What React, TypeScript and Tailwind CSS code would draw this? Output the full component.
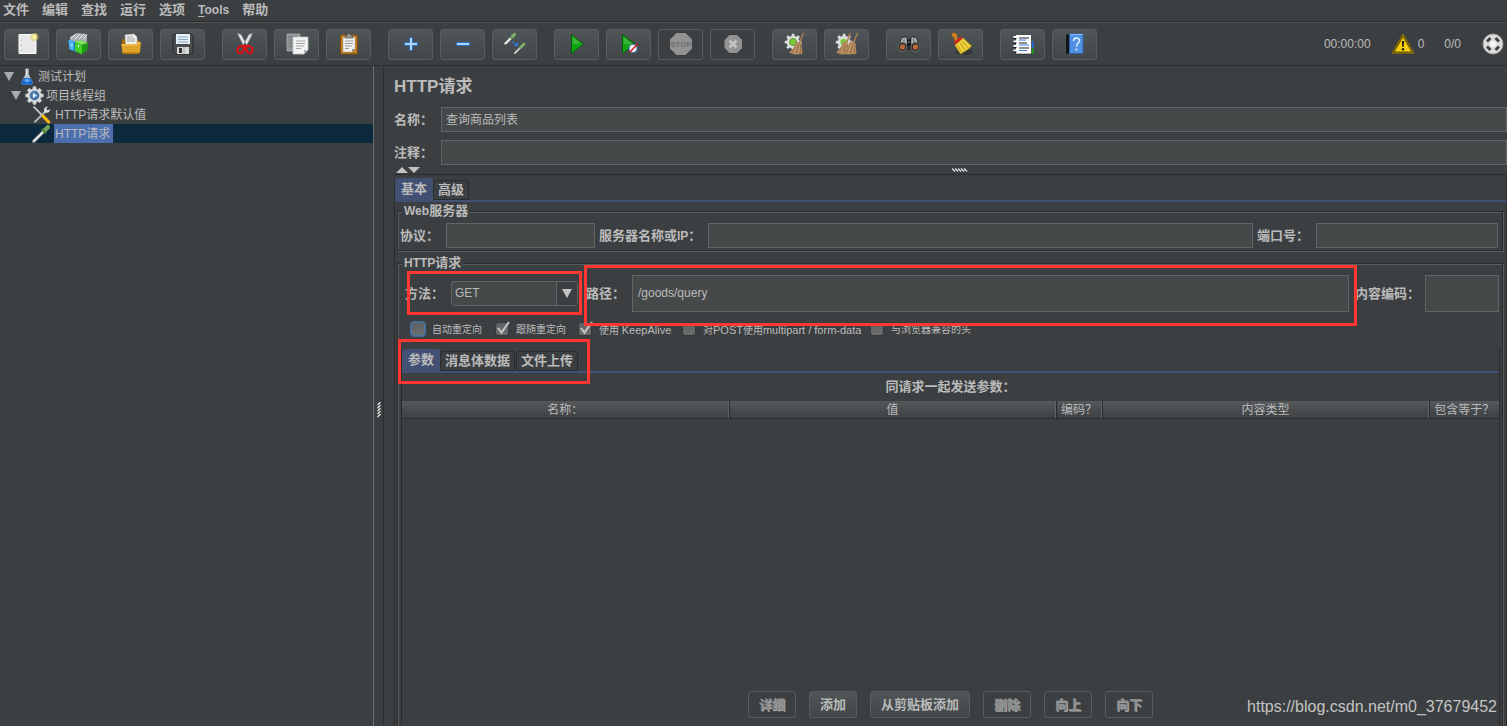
import React from 'react';
import clsx from 'clsx';

interface IconProps {
  children: React.ReactNode;
  className?: string;
}

const Svg: React.FC<IconProps> = ({ children, className = 'size-6' }) => (
  <svg viewBox="0 0 24 24" className={clsx('shrink-0', className)} fill="none" aria-hidden="true">
    {children}
  </svg>
);

const NewIcon = () => (
  <Svg>
    <path d="M4 2.500h17V21.500H4z" fill="#e9e9e9" stroke="#fff" />
    <path d="M6 8v12" stroke="#aaa" strokeDasharray="1 4" />
    <circle cx="19.500" cy="5" r="4" fill="#d8c95a" opacity=".55" />
    <circle cx="19.500" cy="5" r="2" fill="#fdf6a0" />
  </Svg>
);

const TemplatesIcon = () => (
  <Svg>
    <path d="M3 5l7-4 10 1 0 7-4 4-13-3z" fill="#a9b0b3" />
    <path d="M4 6l5-4M8 7l5-5M12 7l5-5M16 7l4-4" stroke="#eceff0" />
    <path d="M1.500 8l5 1 3 2v9l-7-3z" fill="#1585d3" />
    <path d="M1.500 8l5 1v10l-4-2z" fill="#4fb4f0" />
    <path d="M8 10l5-2 8 3-1 8-6 3.500-6-3.500z" fill="#1c9c16" />
    <path d="M8 10l7 2v10l-7-3z" fill="#45cf2b" />
    <path d="M8 10l5-2 8 3-6 1.500z" fill="#8ae366" />
    <path d="M11.500 13v2M5 12v2" stroke="#fff" />
  </Svg>
);

const OpenIcon = () => (
  <Svg>
    <path d="M3 8l2-1h2v4h10V8h3l1 12-2 2H4l-1-2z" fill="#a96d08" />
    <path d="M6 3l9-1 3 3v10H7z" fill="#f1f1f1" stroke="#bdbdbd" strokeWidth=".7" />
    <path d="M8 5h6M8 7h8M8 9h8" stroke="#8e8e8e" strokeWidth=".8" />
    <path d="M2 12h15l2-2h3l-1 10-2 1.500H4z" fill="#dfa32a" />
    <path d="M3 13h15l1-2h2" stroke="#f8d06a" />
    <path d="M4 21h15" stroke="#a66a04" />
  </Svg>
);

const SaveIcon = () => (
  <Svg>
    <path d="M3 2h17l2 2v17l-1 1H4l-2-2V3z" fill="#4a4d4e" stroke="#222" strokeWidth=".8" />
    <path d="M5 2h14v10H5z" fill="#e8eff6" />
    <path d="M7 5h10M7 7.500h10M7 10h10" stroke="#87a7c4" />
    <path d="M6 15h12v7H6z" fill="#d6d8d9" />
    <path d="M8 16h3v5H8z" fill="#333" />
    <path d="M13 15v7" stroke="#a7a9aa" />
  </Svg>
);

const CutIcon = () => (
  <Svg>
    <path d="M4.500 1.500l3.500 1 6 11-2.500 2zM19.500 1.500l-3.500 1-6 11 2.500 2z" fill="#e6e6e6" stroke="#9b9b9b" strokeWidth=".6" />
    <path d="M11 14c-3-.5-6 .5-6.500 3.500s2 4.500 4.500 3 2-4.500 2-6.500zM13 14c3-.5 6 .5 6.500 3.500s-2 4.500-4.500 3-2-4.500-2-6.500z" stroke="#dd1212" strokeWidth="2.200" />
  </Svg>
);

const CopyIcon = () => (
  <Svg>
    <path d="M2 2h13v17H2z" fill="#8f9496" stroke="#a9adaf" strokeWidth=".8" />
    <path d="M4 5h8M4 8h4M4 11h4M4 14h4" stroke="#6e7375" />
    <path d="M8 5h15v13l-4 4H8z" fill="#f3f3f3" stroke="#c9c9c9" strokeWidth=".8" />
    <path d="M11 9h9M11 11.500h9M11 14h8M11 16.500h5" stroke="#a5a5a5" />
    <path d="M23 18h-4v4z" fill="#b5b5b5" />
  </Svg>
);

const PasteIcon = () => (
  <Svg>
    <rect x="3.500" y="3" width="17" height="19" rx="1" fill="#c07b1c" stroke="#7f4c09" />
    <path d="M6 5h12v12l-3 3H6z" fill="#f1f1f1" stroke="#aaa" strokeWidth=".6" />
    <path d="M8 9h8M8 11.500h8M8 14h7M8 16.500h4" stroke="#9a9a9a" />
    <path d="M8 6V4l2-.5 1-2h2l1 2 2 .5v2z" fill="#95988f" stroke="#4d4f4b" strokeWidth=".7" />
    <path d="M18 17h-3v3z" fill="#888" />
  </Svg>
);

const PlusIcon = () => (
  <Svg>
    <path d="M10.500 5.500h3v5h5v3h-5v5h-3v-5h-5v-3h5z" fill="#a9d4fb" stroke="#2b6cc0" />
  </Svg>
);

const MinusIcon = () => (
  <Svg>
    <path d="M5.500 10.500h13v3h-13z" fill="#a9d4fb" stroke="#2b6cc0" />
  </Svg>
);

const ToggleIcon = () => (
  <Svg>
    <path d="M2.500 11.500l6-6" stroke="#e9e9e4" strokeWidth="2.400" strokeLinecap="round" />
    <path d="M8.500 5.500l3-3" stroke="#7fae6b" strokeWidth="3.200" strokeLinecap="round" />
    <path d="M7 4l3 3" stroke="#4c7040" />
    <path d="M12 21l5.500-5.500" stroke="#c9ccc7" strokeWidth="1.800" strokeLinecap="round" />
    <path d="M17.500 15.500l3.500-3.500" stroke="#7fae6b" strokeWidth="2.800" strokeLinecap="round" />
    <path d="M8.500 9.500l4 3" stroke="#2878e8" strokeWidth="1.200" strokeDasharray="2 1" />
    <path d="M15 10v4h-4z" fill="#2878e8" />
  </Svg>
);

const PlayShape = () => (
  <>
    <path d="M6.500 2.500l12 9.500-12 9.500z" fill="#12a512" stroke="#075f0b" />
    <path d="M7.500 5l9 7h-9z" fill="#4cb94c" opacity=".7" />
  </>
);

const StartIcon = () => <Svg><PlayShape /></Svg>;

const StartNoTimersIcon = () => (
  <Svg>
    <g transform="translate(-1 0)"><PlayShape /></g>
    <circle cx="16" cy="16.500" r="4" fill="#f5f8fb" stroke="#4a7db5" strokeWidth="1.200" />
    <path d="M12.500 20.500l8-8.500" stroke="#e01b1b" strokeWidth="1.500" />
  </Svg>
);

const StopIcon = () => (
  <Svg>
    <path d="M7.500 1h9L23 7.500v9L16.500 23h-9L1 16.500v-9z" fill="#929292" />
    <text x="12" y="15" textAnchor="middle" fontSize="8" fontWeight="bold" fill="#707070">STOP</text>
  </Svg>
);

const ShutdownIcon = () => (
  <Svg>
    <path d="M8.500 3h7.500L21 8v8l-5 5H8.500L3.500 16V8z" fill="#929292" />
    <path d="M8.500 8.500l7 7M15.500 8.500l-7 7" stroke="#c4c4c4" strokeWidth="2.600" />
  </Svg>
);

const gearPath =
  'M10.500 1h3l.6 3 2 .8 2.600-1.700 2.200 2.200-1.700 2.600.8 2 3 .6v3l-3 .6-.8 2 1.700 2.600-2.200 2.200-2.600-1.700-2 .8-.6 3h-3l-.6-3-2-.8-2.600 1.700-2.200-2.200 1.700-2.600-.8-2-3-.6v-3l3-.6.8-2-1.700-2.600 2.200-2.200 2.600 1.700 2-.8z';

interface BroomProps {
  x: number;
}

const StrawBroom: React.FC<BroomProps> = ({ x }) => (
  <g transform={`translate(${x} 0)`}>
    <path d="M20.500 1l-4 10" stroke="#a77d52" strokeWidth="1.600" />
    <path d="M13 9l5.500 2.500 1 10.500-8 .5-5.500-2c3.500-2.500 6-6.500 7-11.500z" fill="#b48b60" />
    <path d="M14 12l-4.500 8M16 12l-2.500 9M17.500 13l-.5 8" stroke="#7b5934" strokeWidth=".7" />
    <path d="M14.500 11l-3.500 9M17 12l-1.500 9" stroke="#d3af83" strokeWidth=".6" />
  </g>
);

const ClearIcon = () => (
  <Svg>
    <g transform="translate(1 1) scale(.76)">
      <path d={gearPath} fill="#dedede" />
    </g>
    <circle cx="10" cy="10" r="3.500" fill="#78cc37" stroke="#458b1a" strokeWidth=".8" />
    <StrawBroom x={0} />
  </Svg>
);

const ClearAllIcon = () => (
  <Svg>
    <g transform="translate(0 1) scale(.76)">
      <path d={gearPath} fill="#dedede" />
    </g>
    <circle cx="8.500" cy="10" r="3.200" fill="#78cc37" />
    <StrawBroom x={-5} />
    <StrawBroom x={2} />
  </Svg>
);

const SearchIcon = () => (
  <Svg>
    <path d="M5 5l4-1 2 3h2l2-3 4 1 4.500 9v4H.5v-4z" fill="#292b2c" />
    <path d="M5 6l4-1 1 8-7 1zM19 6l-4-1-1 8 7 1z" fill="#8a8f91" />
    <path d="M6 6l-3 7M18 6l3 7M9 6v5M15 6v5" stroke="#d0d4d5" />
    <circle cx="5.500" cy="15" r="4.500" fill="#222" stroke="#777b7d" />
    <circle cx="18.500" cy="15" r="4.500" fill="#222" stroke="#777b7d" />
    <circle cx="5.500" cy="15" r="2.800" fill="#b96938" />
    <circle cx="18.500" cy="15" r="2.800" fill="#b96938" />
    <path d="M10.500 8h3v6h-3z" fill="#161616" />
    <path d="M11 10h2" stroke="#8a8f91" />
  </Svg>
);

const ResetSearchIcon = () => (
  <Svg>
    <ellipse cx="15" cy="20" rx="9" ry="3" fill="#2e3132" opacity=".7" />
    <path d="M2 3l2.500-2.500L8 2l1 6-3 2-1-4z" fill="#c88229" stroke="#875116" strokeWidth=".7" />
    <path d="M6 13l8-7 8.500 8-3 3-8 5z" fill="#edd03b" stroke="#b9950f" strokeWidth=".7" />
    <path d="M11 11l5 7M13.500 9.500l6 6.500M8.500 13l4 7" stroke="#c09b18" />
    <path d="M5.500 11.500l7-6" stroke="#d6201a" strokeWidth="2.400" />
  </Svg>
);

const FunctionIcon = () => (
  <Svg>
    <path d="M20 9h2.500v7H20z" fill="#1f6fe0" />
    <path d="M20 16h2.500v6H20z" fill="#129d1a" />
    <path d="M4.500 2.500h16V22h-16z" fill="#fbfbfb" stroke="#151515" strokeWidth=".6" />
    <path d="M8 6h10M8 11h8M8 16h10" stroke="#222" />
    <path d="M8 8h7M8 13h10M8 18.500h8" stroke="#3c80dd" />
    <path d="M2.500 5h3M2.500 9.500h3M2.500 14h3M2.500 18.500h3" stroke="#fff" strokeWidth="2.200" />
    <path d="M2.500 6.500h3M2.500 11h3M2.500 15.500h3M2.500 20h3" stroke="#111" />
  </Svg>
);

const HelpIcon = () => (
  <Svg>
    <path d="M3 3l3.500-1.500v20L3 22z" fill="#121619" />
    <path d="M6.500 2h13.500v19.500H6.500z" fill="#4f90e2" stroke="#2c62ac" strokeWidth=".8" />
    <path d="M7 2.500h13" stroke="#8dbbf3" />
    <path d="M10.500 9c0-4 6-4 6-.5 0 2.500-3 2.500-3 6" stroke="#e2efff" strokeWidth="1.500" />
    <circle cx="13.500" cy="17.500" r="1.100" fill="#e2efff" />
  </Svg>
);

const WarningIcon = () => (
  <Svg>
    <path d="M12 2.500L22.500 21h-21z" fill="#f7cd12" stroke="#8c6d00" strokeWidth="1.500" strokeLinejoin="round" />
    <path d="M12 4.500L21 20H3z" stroke="#3b3000" strokeWidth=".8" />
    <path d="M10.800 9h2.400l-.6 6h-1.200z" fill="#1c1a10" />
    <circle cx="12" cy="17.300" r="1.200" fill="#1c1a10" />
  </Svg>
);

const RemoteIcon = () => (
  <Svg>
    <circle cx="12" cy="12" r="10" fill="#dcdcdc" stroke="#a4a4a4" />
    <path d="M9.500 6L6 9.500M14.500 6L18 9.500M9.500 18L6 14.500M14.500 18l3.500-3.500" stroke="#3e3e3e" strokeWidth="2.800" />
    <circle cx="12" cy="12" r="3" fill="#f4f4f4" />
  </Svg>
);

const FlaskIcon = () => (
  <Svg className="size-[19px]">
    <path d="M9.500 2h4v7l5.500 11-1.500 2.500h-12L4 20 9.500 9z" fill="#b9c4ce" />
    <path d="M7.500 14h8l3.500 6-1.500 2.500h-12L4 20z" fill="#1b66c9" />
    <ellipse cx="11.500" cy="17" rx="3.500" ry="2.200" fill="#57a5f4" />
    <path d="M10.500 3v8" stroke="#fff" />
  </Svg>
);

const ThreadGroupIcon = () => (
  <Svg className="size-[19px]">
    <path d={gearPath} fill="#d9dde0" stroke="#c4c9cd" strokeWidth="1.200" />
    <circle cx="12" cy="12" r="5.500" fill="#4a79b6" stroke="#33598c" />
    <path d="M10 8.500l5 3.500-5 3.500z" fill="#e6f1ff" />
  </Svg>
);

const DefaultsIcon = () => (
  <Svg className="size-[19px]">
    <path d="M3 22L18 7" stroke="#7f858a" strokeWidth="3" />
    <path d="M3 22L18 7" stroke="#e0e3e5" strokeWidth="1.200" />
    <path d="M16 9c-2-3 0-7 4-7l-2 3 2 2 3-2c0 4-4 6-7 4z" fill="#dfe2e4" />
    <path d="M2 2l12 12" stroke="#c9cdd0" strokeWidth="2" />
    <path d="M14 14l7 7.500" stroke="#f0b90e" strokeWidth="4" strokeLinecap="round" />
  </Svg>
);

const SamplerIcon = () => (
  <Svg className="size-[19px]">
    <path d="M2 22L14 10" stroke="#6e7479" strokeWidth="4.400" strokeLinecap="round" />
    <path d="M2.500 21.500L14 10" stroke="#e9edf0" strokeWidth="2.600" strokeLinecap="round" />
    <path d="M15.500 8.500l4.500-4.500" stroke="#6fa55a" strokeWidth="5.500" strokeLinecap="round" />
    <path d="M12 6l6 6" stroke="#4b7b42" strokeWidth="2" />
  </Svg>
);

interface ToolItem {
  label: string;
  icon: React.FC;
  disabled?: boolean;
}

const toolGroups: ToolItem[][] = [
  [
    { label: '新建', icon: NewIcon },
    { label: '模板', icon: TemplatesIcon },
    { label: '打开', icon: OpenIcon },
    { label: '保存', icon: SaveIcon },
  ],
  [
    { label: '剪切', icon: CutIcon },
    { label: '复制', icon: CopyIcon },
    { label: '粘贴', icon: PasteIcon },
  ],
  [
    { label: '展开', icon: PlusIcon },
    { label: '收起', icon: MinusIcon },
    { label: '切换', icon: ToggleIcon },
  ],
  [
    { label: '启动', icon: StartIcon },
    { label: '不停顿开始', icon: StartNoTimersIcon },
    { label: '停止', icon: StopIcon, disabled: true },
    { label: '关闭', icon: ShutdownIcon, disabled: true },
  ],
  [
    { label: '清除', icon: ClearIcon },
    { label: '清除全部', icon: ClearAllIcon },
  ],
  [
    { label: '搜索', icon: SearchIcon },
    { label: '重置搜索', icon: ResetSearchIcon },
  ],
  [
    { label: '函数助手', icon: FunctionIcon },
    { label: '帮助', icon: HelpIcon },
  ],
];

const menus = ['文件', '编辑', '查找', '运行', '选项', 'Tools', '帮助'];

const MenuBar = () => (
  <nav className="flex h-[22px] items-start gap-[13px] border-b border-[#2b2d2e] pl-[3px] text-[13px] leading-5 font-bold">
    {menus.map((menu) => (
      <button key={menu} type="button">
        {menu === 'Tools' ? <span className="text-xs leading-[18px]"><u className="underline-offset-2">T</u>ools</span> : menu}
      </button>
    ))}
  </nav>
);

const Toolbar = () => (
  <div className="flex h-[44px] items-center justify-between border-t border-b border-t-[#57534f] border-b-[#2b2d2e] pl-1">
    <div className="flex gap-[17px]">
      {toolGroups.map((group, i) => (
        <div key={i} className="flex gap-[7px]">
          {group.map(({ label, icon: Icon, disabled }) => (
            <button
              key={label}
              type="button"
              aria-label={label}
              disabled={disabled}
              className={clsx(
                'flex h-[31px] w-[45px] items-center justify-center rounded-[3px] border border-[#5a5d5e]',
                !disabled && 'bg-linear-to-b from-[#505658] to-[#414648]'
              )}
            >
              <Icon />
            </button>
          ))}
        </div>
      ))}
    </div>
    <div className="flex items-center pr-[2px] text-xs">
      <span className="mr-5">00:00:00</span>
      <WarningIcon />
      <span className="mr-5 ml-[3px]">0</span>
      <span className="mr-5">0/0</span>
      <RemoteIcon />
    </div>
  </div>
);

const Expander = () => (
  <svg viewBox="0 0 10 9" className="mr-1 h-[9px] w-[10px] shrink-0" aria-hidden="true">
    <path d="M0 0h10L5 9z" fill="#a9abac" />
  </svg>
);

const Tree = () => (
  <ul className="text-xs leading-[19px]">
    <li className="flex h-[19px] items-center pl-1">
      <Expander />
      <FlaskIcon />
      <span className="pt-px pl-px">测试计划</span>
    </li>
    <li className="flex h-[19px] items-center pl-[11px]">
      <Expander />
      <ThreadGroupIcon />
      <span className="pt-px pl-[2px]">项目线程组</span>
    </li>
    <li className="flex h-[19px] items-center pl-8">
      <DefaultsIcon />
      <span className="ml-[3px] px-px pt-px">HTTP请求默认值</span>
    </li>
    <li className="flex h-[19px] items-center bg-[#0d293e] pl-8">
      <SamplerIcon />
      <span className="ml-[3px] h-[19px] bg-[#4b6eaf] pt-px pr-[3px] pl-px leading-[18px]">HTTP请求</span>
    </li>
  </ul>
);

const fieldClass = 'min-w-0 border border-[#646464] bg-[#45494a] px-1 pb-[2px] text-xs outline-none';
const labelClass = 'shrink-0 text-[13px] font-bold whitespace-nowrap';
const legendClass = 'ml-1 bg-[#3c3f41] px-[2px] text-[13px] leading-4 font-bold';
const groupClass =
  'mr-[3px] ml-[2px] min-w-0 border border-[#2a2c2d] shadow-[inset_1px_1px_#595b5c,1px_1px_#595b5c]';
const markClass = 'pointer-events-none absolute z-10 border-3 border-[#ff3733]';

interface TabsProps {
  tabs: string[];
}

const Tabs: React.FC<TabsProps> = ({ tabs }) => (
  <div role="tablist" className="flex items-end border-b-2 border-[#425073] text-[13px] leading-[18px] font-bold">
    {tabs.map((tab, i) => (
      <button
        key={tab}
        type="button"
        role="tab"
        aria-selected={i === 0}
        className={clsx(
          'rounded-t-[3px]',
          i === 0
            ? 'h-[22px] bg-[#425073] px-[6px] pb-px'
            : 'mr-px h-5 border border-[#2a2c2d] px-1'
        )}
      >
        {tab}
      </button>
    ))}
  </div>
);

const Grip: React.FC<{ className: string }> = ({ className }) => (
  <svg viewBox="0 0 16 4" className={className} aria-hidden="true">
    <path d="M0 .5L3 3.500M3 .5L6 3.500M6 .5L9 3.500M9 .5L12 3.500M12 .5L15 3.500" stroke="#f0f0f0" strokeWidth="1.100" />
  </svg>
);

interface CheckProps {
  checked?: boolean;
  focused?: boolean;
  className: string;
  children: React.ReactNode;
}

const Check: React.FC<CheckProps> = ({ checked, focused, className, children }) => (
  <label className={clsx('flex items-center text-[10px] leading-4 whitespace-nowrap', className)}>
    <span className="relative flex">
      <input
        type="checkbox"
        defaultChecked={checked}
        className={clsx(
          'size-[14px] appearance-none rounded-[3px] border bg-linear-to-b from-[#5e6162] to-[#6c6d6d]',
          focused ? 'border-[#4d78a8] shadow-[0_0_0_1px_#48678c]' : 'border-[#34383a]'
        )}
      />
      {checked && (
        <svg viewBox="0 0 16 14" className="pointer-events-none absolute -top-px left-0 h-[14px] w-4" aria-hidden="true">
          <path d="M3 7l3.500 4.500L14 1" fill="none" stroke="#c8c8c8" strokeWidth="2" />
        </svg>
      )}
    </span>
    <span className="ml-[7px] pt-[2px] leading-[14px]">{children}</span>
  </label>
);

const WebServer = () => (
  <fieldset className={clsx(groupClass, 'mt-px mb-px')}>
    <legend className={legendClass}><span className="text-xs">Web</span>服务器</legend>
    <div className="flex items-center pt-1 pr-1 pb-[2px] pl-[2px]">
      <label htmlFor="protocol" className={clsx(labelClass, 'w-[46px]')}>协议：</label>
      <input id="protocol" className={clsx(fieldClass, 'h-[25px] w-[149px]')} />
      <label htmlFor="server" className={clsx(labelClass, 'ml-1 w-[109px]')}>
        服务器名称或<span className="text-xs">IP</span>：
      </label>
      <input id="server" className={clsx(fieldClass, 'h-[25px] flex-1')} />
      <label htmlFor="port" className={clsx(labelClass, 'ml-1 w-[59px]')}>端口号：</label>
      <input id="port" className={clsx(fieldClass, 'h-[25px] w-[182px]')} />
    </div>
  </fieldset>
);

const RequestLine = () => (
  <div className="flex h-[37px] items-stretch pr-[3px] pl-[7px]">
    <div className="relative flex items-center">
      <label htmlFor="method" className={clsx(labelClass, 'w-[46px]')}>方法：</label>
      <div className="relative flex">
        <select
          id="method"
          defaultValue="GET"
          className="h-[25px] w-[127px] appearance-none rounded-[3px] border border-[#646464] bg-[#45494a] px-[3px] pb-[2px] text-xs outline-none"
        >
          <option>GET</option>
          <option>POST</option>
        </select>
        <span className="pointer-events-none absolute inset-y-px right-px flex w-[21px] items-center justify-center border-l border-[#646464] bg-[#3c3f41]">
          <svg viewBox="0 0 10 9" className="h-[9px] w-[10px]" aria-hidden="true">
            <path d="M0 0h10L5 9z" fill="#c3c3c3" />
          </svg>
        </span>
      </div>
      <span className={clsx(markClass, '-top-1 -right-1 -bottom-[3px] left-[2px]')} />
    </div>
    <div className="relative ml-2 flex flex-1 items-center">
      <label htmlFor="path" className={clsx(labelClass, 'w-[46px]')}>路径：</label>
      <input id="path" defaultValue="/goods/query" className={clsx(fieldClass, 'h-full flex-1 pl-[5px]')} />
      <span className={clsx(markClass, '-top-[10px] -right-2 -bottom-[14px] -left-[2px]')} />
    </div>
    <div className="ml-[6px] flex items-center">
      <label htmlFor="encoding" className={clsx(labelClass, 'w-[70px]')}>内容编码：</label>
      <input id="encoding" className={clsx(fieldClass, 'h-full w-[74px]')} />
    </div>
  </div>
);

const actions = [
  { label: '详细', enabled: false },
  { label: '添加', enabled: true },
  { label: '从剪贴板添加', enabled: true },
  { label: '删除', enabled: false },
  { label: '向上', enabled: false },
  { label: '向下', enabled: false },
];

const thClass =
  'border-r border-[#2a2c2d] pt-[2px] font-normal shadow-[inset_-1px_0_#606465] last:border-r-0 last:shadow-none';

const Parameters = () => (
  <div className="flex flex-1 flex-col">
    <table className="w-full table-fixed border-collapse text-xs leading-[15px]">
      <caption className="h-7 text-[13px] leading-7 font-bold">同请求一起发送参数：</caption>
      <colgroup>
        <col />
        <col />
        <col className="w-[46px]" />
        <col />
        <col className="w-[70px]" />
      </colgroup>
      <thead>
        <tr className="border-b border-[#2a2c2d] bg-linear-to-b from-[#55595b] to-[#3d4143]">
          <th scope="col" className={thClass}>名称：</th>
          <th scope="col" className={thClass}>值</th>
          <th scope="col" className={thClass}>编码？</th>
          <th scope="col" className={thClass}>内容类型</th>
          <th scope="col" className={thClass}>包含等于？</th>
        </tr>
      </thead>
      <tbody />
    </table>
    <div className="mt-auto flex justify-center gap-[13px] pb-2">
      {actions.map(({ label, enabled }) => (
        <button
          key={label}
          type="button"
          disabled={!enabled}
          className={clsx(
            'h-[27px] rounded-[3px] border border-[#5a5d5e] px-[10px] text-[13px] leading-none font-bold',
            enabled
              ? 'bg-linear-to-b from-[#505658] to-[#414648]'
              : 'text-[#8c8c8c] [text-shadow:1px_1px_#a4a4a4]'
          )}
        >
          {label}
        </button>
      ))}
    </div>
  </div>
);

const HttpRequest = () => (
  <fieldset className={clsx(groupClass, 'mt-[3px] flex flex-1 flex-col border-b-0')}>
    <legend className={legendClass}><span className="text-xs">HTTP</span>请求</legend>
    <div className="flex flex-1 flex-col pt-1">
      <RequestLine />
      <div className="mt-[9px] flex h-4 items-center pl-[13px]">
        <Check focused className="w-[84px]">自动重定向</Check>
        <Check checked className="w-[83px]">跟随重定向</Check>
        <Check checked className="w-[104px]">使用 <span className="text-[11px]">KeepAlive</span></Check>
        <Check className="w-[188px]">
          对<span className="text-[11px]">POST</span>使用<span className="text-[11px]">multipart / form-data</span>
        </Check>
        <Check className="w-[110px]">与浏览器兼容的头</Check>
      </div>
      <div className="relative mt-3 mr-[2px] ml-[3px] flex flex-1 flex-col border-x border-[#2a2c2d]">
        <Tabs tabs={['参数', '消息体数据', '文件上传']} />
        <span className={clsx(markClass, '-top-[10px] -left-1 h-[45px] w-[192px]')} />
        <Parameters />
      </div>
    </div>
  </fieldset>
);

export default function App() {
  return (
    <div className="relative flex min-h-screen flex-col bg-[#3c3f41] font-['Liberation_Sans','Noto_Sans_CJK_SC',sans-serif] text-[#bbbbbb]">
      <MenuBar />
      <Toolbar />
      <div className="flex flex-1">
        <aside className="w-[374px] shrink-0 border-r border-[#6a6d6e] pt-px">
          <Tree />
        </aside>
        <div className="flex w-[9px] shrink-0 items-center justify-center pt-7">
          <Grip className="h-1 w-4 shrink-0 rotate-90" />
        </div>
        <main className="flex min-w-0 flex-1 flex-col border-l border-[#2a2c2d] pl-[10px]">
          <h1 className="pt-2 text-[17px] leading-[26px] font-bold">HTTP请求</h1>
          <div className="mt-[7px] flex items-center">
            <label htmlFor="name" className={clsx(labelClass, 'w-[47px]')}>名称：</label>
            <input id="name" defaultValue="查询商品列表" className={clsx(fieldClass, 'h-[25px] flex-1')} />
          </div>
          <div className="mt-2 flex items-center">
            <label htmlFor="comment" className={clsx(labelClass, 'w-[47px]')}>注释：</label>
            <input id="comment" className={clsx(fieldClass, 'h-[25px] flex-1')} />
          </div>
          <div className="flex h-[10px] items-center border-b border-[#2a2c2d]">
            <svg viewBox="0 0 24 6" className="ml-[2px] h-[6px] w-6" aria-hidden="true">
              <path d="M0 6l6-6 6 6zM12 0h12l-6 6z" fill="#c3c3c3" />
            </svg>
            <div className="flex flex-1 justify-center pr-2">
              <Grip className="h-1 w-4" />
            </div>
          </div>
          <div className="mt-[3px] flex flex-1 flex-col border-x border-[#2a2c2d]">
            <Tabs tabs={['基本', '高级']} />
            <WebServer />
            <HttpRequest />
          </div>
        </main>
      </div>
      <span className="absolute right-[10px] bottom-[9px] text-base leading-5 text-[#c4c4c4]">
        https://blog.csdn.net/m0_37679452
      </span>
    </div>
  );
}
